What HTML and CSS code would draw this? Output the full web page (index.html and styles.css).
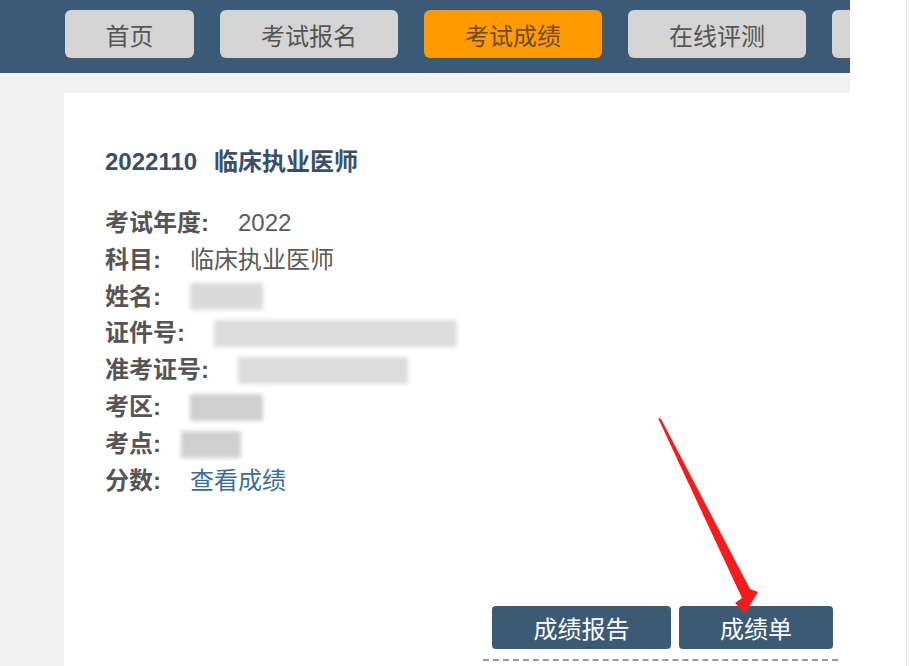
FILE: index.html
```html
<!DOCTYPE html>
<html lang="zh-CN">
<head>
<meta charset="utf-8">
<title>考试成绩</title>
<link rel="stylesheet" href="styles.css">
</head>
<body>
<div class="screen">
  <div class="page">
    <nav class="nav">
      <a class="tab tab-short">首页</a>
      <a class="tab">考试报名</a>
      <a class="tab active">考试成绩</a>
      <a class="tab">在线评测</a>
      <a class="tab"></a>
    </nav>
    <div class="main">
      <div class="card">
        <h2 class="title"><span class="code">2022110</span>临床执业医师</h2>
        <ul class="info">
          <li><span class="label">考试年度:</span><span class="value">2022</span></li>
          <li><span class="label">科目:</span><span class="value">临床执业医师</span></li>
          <li><span class="label">姓名:</span><span class="value"><span class="blur b-name"></span></span></li>
          <li><span class="label">证件号:</span><span class="value"><span class="blur b-id"></span></span></li>
          <li><span class="label">准考证号:</span><span class="value"><span class="blur b-ticket"></span></span></li>
          <li><span class="label">考区:</span><span class="value"><span class="blur b-area"></span></span></li>
          <li><span class="label">考点:</span><span class="value v-site"><span class="blur b-site"></span></span></li>
          <li><span class="label">分数:</span><span class="value"><a class="link">查看成绩</a></span></li>
        </ul>
        <div class="actions">
          <a class="btn btn-report">成绩报告</a>
          <a class="btn btn-sheet">成绩单</a>
        </div>
        <div class="dash"></div>
      </div>
    </div>
  </div>
  <div class="edge"></div>
  <svg class="arrow" width="909" height="666" viewBox="0 0 909 666">
    <polygon points="658,418 661,419 750,589 758,592 745,613 735,603 742,598" fill="#f41c1c"/>
  </svg>
</div>
</body>
</html>
```

FILE: styles.css
```css
* { box-sizing: border-box; }
html, body {
  margin: 0;
  padding: 0;
  background: #ffffff;
  height: 100%;
  overflow: hidden;
}
body {
  font-family: "Liberation Sans", "Noto Sans CJK SC", sans-serif;
  color: #555;
}
.screen {
  position: relative;
  display: flex;
  width: 909px;
  height: 666px;
  overflow: hidden;
}
.page {
  width: 850px;
  flex: none;
  display: flex;
  flex-direction: column;
}
.edge {
  flex: 1;
  margin-right: 2px;
  border-right: 1px solid #e8e8e8;
}
.nav {
  height: 73px;
  background: #3b5a76;
  display: flex;
  gap: 26px;
  padding: 10px 0 0 65px;
  overflow: hidden;
}
.tab {
  flex: none;
  width: 178px;
  height: 48px;
  border-radius: 6px;
  background: #d4d4d4;
  color: #555;
  font-size: 24px;
  display: flex;
  align-items: center;
  justify-content: center;
}
.tab-short { width: 129px; }
.tab.active {
  background: #ff9a00;
  color: #6e4a1c;
}
.main {
  flex: 1;
  background: #f2f2f2;
  padding: 20px 0 0 64px;
  display: flex;
}
.card {
  flex: 1;
  background: #ffffff;
  padding: 54px 17px 0 41px;
  display: flex;
  flex-direction: column;
}
.title {
  margin: 0;
  font-size: 24px;
  line-height: 30px;
  font-weight: bold;
  color: #3a4f66;
}
.code { margin-right: 17px; }
.info {
  list-style: none;
  margin: 28px 0 0 0;
  padding: 0;
}
.info li {
  height: 36.8px;
  line-height: 36.8px;
  font-size: 24px;
  display: flex;
  align-items: center;
}
.label {
  font-weight: bold;
  color: #555;
}
.value {
  margin-left: 29px;
  color: #5a5a5a;
  display: flex;
  align-items: center;
}
.v-site { margin-left: 20px; }
.link { color: #3e6b94; }
.blur {
  display: inline-block;
  height: 27px;
  background: #d6d6d6;
  filter: blur(2px);
}
.b-name { width: 73px; background: #dadada; }
.b-id { width: 243px; background: #dcdcdc; }
.b-ticket { width: 170px; background: #dcdcdc; }
.b-area { width: 73px; background: #cfcfcf; }
.b-site { width: 60px; background: #d0d0d0; }
.actions {
  margin-top: 107px;
  display: flex;
  justify-content: flex-end;
  gap: 8px;
}
.btn {
  height: 43px;
  border-radius: 4px;
  background: #3b5a73;
  color: #ffffff;
  font-size: 24px;
  display: flex;
  align-items: center;
  justify-content: center;
}
.btn-report { width: 179px; }
.btn-sheet { width: 154px; }
.dash {
  align-self: flex-end;
  width: 355px;
  margin: 10px -5px 0 0;
  border-top: 2px dashed #9a9a9a;
}
.arrow {
  position: absolute;
  left: 0;
  top: 0;
  pointer-events: none;
}
```
